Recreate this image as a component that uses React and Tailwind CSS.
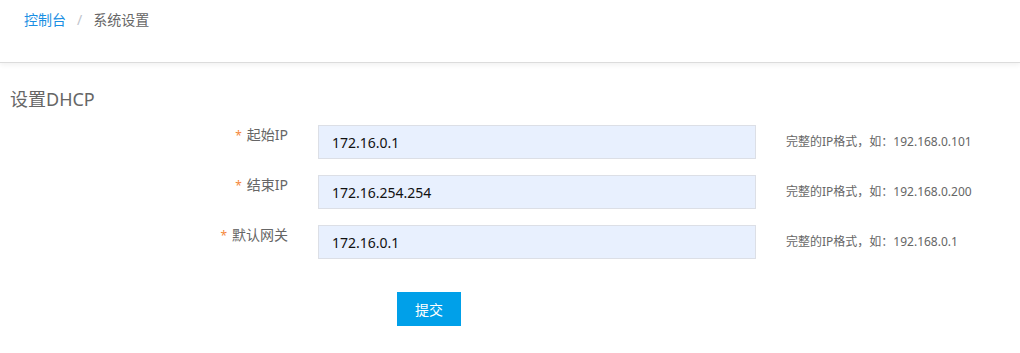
import React from "react";

const font = { fontFamily: '"Noto Sans", "Noto Sans CJK SC", sans-serif' };

const rows = [
  { label: "起始IP", value: "172.16.0.1", hint: "完整的IP格式，如：192.168.0.101" },
  { label: "结束IP", value: "172.16.254.254", hint: "完整的IP格式，如：192.168.0.200" },
  { label: "默认网关", value: "172.16.0.1", hint: "完整的IP格式，如：192.168.0.1" },
];

export default function App() {
  return (
    <div className="w-[1020px] h-[353px] bg-white overflow-hidden" style={font}>
      <div className="h-[63px] border-b border-[#dcdcdc] shadow-[0_2px_5px_rgba(0,0,0,0.06)] px-[24px] pt-[10px]">
        <div className="flex items-center text-[14px] leading-[20px]">
          <span className="text-[#1a8fe3]">控制台</span>
          <span className="text-[#c0c4cc] mx-[11px]">/</span>
          <span className="text-[#666]">系统设置</span>
        </div>
      </div>
      <div className="pl-[10px] mt-[24px] text-[18px] leading-[24px] text-[#666]">设置DHCP</div>
      <div className="mt-[14px] flex flex-col gap-[16px]">
        {rows.map((r) => (
          <div key={r.label} className="flex items-start">
            <div className="w-[288px] flex items-center justify-end text-[14px] leading-[18px] text-[#666]">
              <span className="text-[#f5883c] text-[12px] mr-[5px] mt-[2px]">*</span>
              <span>{r.label}</span>
            </div>
            <div className="ml-[30px] w-[438px] h-[34px] bg-[#e8f0fe] border border-[#dcdfe6] flex items-center pl-[13px] text-[14px] text-[#111]">
              {r.value}
            </div>
            <div className="ml-[30px] h-[34px] flex items-center text-[12px] text-[#666]">{r.hint}</div>
          </div>
        ))}
      </div>
      <div className="mt-[33px] pl-[397px]">
        <button className="w-[64px] h-[34px] bg-[#00a0e9] text-white text-[14px]">提交</button>
      </div>
    </div>
  );
}
